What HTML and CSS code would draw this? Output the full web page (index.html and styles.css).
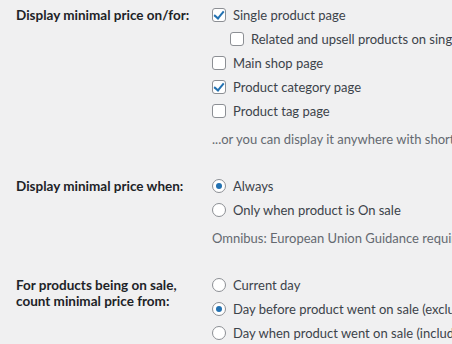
FILE: index.html
```html
<!DOCTYPE html>
<html lang="en">
<head>
  <meta charset="UTF-8" />
  <meta name="viewport" content="width=device-width, initial-scale=1" />
  <title>Minimal price settings</title>
  <link rel="stylesheet" href="styles.css">
</head>
<body>

  <div class="form-table">

    <div class="row">
      <div class="th">Display minimal price on/for:</div>
      <div class="td">
        <label class="opt"><input type="checkbox" checked /> Single product page</label>
        <label class="opt sub"><input type="checkbox" /> Related and upsell products on single product page</label>
        <label class="opt"><input type="checkbox" /> Main shop page</label>
        <label class="opt"><input type="checkbox" checked /> Product category page</label>
        <label class="opt"><input type="checkbox" /> Product tag page</label>
        <p class="description">...or you can display it anywhere with shortcode [omnibus_price_message]</p>
      </div>
    </div>

    <div class="row">
      <div class="th">Display minimal price when:</div>
      <div class="td">
        <label class="opt"><input type="radio" name="when" checked /> Always</label>
        <label class="opt"><input type="radio" name="when" /> Only when product is On sale</label>
        <p class="description">Omnibus: European Union Guidance requires displaying the minimal price if a product is on sale.</p>
      </div>
    </div>

    <div class="row">
      <div class="th">For products being on sale,<br>count minimal price from:</div>
      <div class="td">
        <label class="opt"><input type="radio" name="from" /> Current day</label>
        <label class="opt"><input type="radio" name="from" checked /> Day before product went on sale (exclude the sale day)</label>
        <label class="opt"><input type="radio" name="from" /> Day when product went on sale (include the sale day)</label>
      </div>
    </div>

  </div>

</body>
</html>
```

FILE: styles.css
```css
body {
  margin: 0;
  background: #f0f0f1;
  font-family: Lato, "Liberation Sans", sans-serif;
  font-size: 13px;
  color: #3c434a;
  overflow: hidden;
  white-space: nowrap;
}
.form-table {
  display: flex;
  flex-direction: column;
  gap: 23px;
  padding-top: 3px;
}
.row {
  display: flex;
}
.th {
  width: 212px;
  padding: 4px 0 0 16px;
  box-sizing: border-box;
  flex-shrink: 0;
  font-weight: 700;
  font-size: 13.5px;
  line-height: 16px;
  color: #1d2327;
}
.td {
  display: flex;
  flex-direction: column;
}
.opt {
  display: flex;
  align-items: center;
  height: 24px;
  gap: 7px;
}
.opt.sub {
  padding-left: 18px;
}
.description {
  margin: 4px 0 0 0;
  line-height: 24px;
  color: #646970;
}
input {
  appearance: none;
  margin: 0;
  width: 14px;
  height: 14px;
  border: 1px solid #8c8f94;
  background: #fff;
  box-sizing: border-box;
  position: relative;
  flex-shrink: 0;
}
input[type="checkbox"] {
  border-radius: 3px;
}
input[type="checkbox"]:checked::before {
  content: "";
  position: absolute;
  left: 3px;
  top: 0px;
  width: 4px;
  height: 8px;
  border: solid #2271b1;
  border-width: 0 2px 2px 0;
  transform: rotate(40deg);
}
input[type="radio"] {
  border-radius: 50%;
}
input[type="radio"]:checked::before {
  content: "";
  position: absolute;
  left: 3px;
  top: 3px;
  width: 6px;
  height: 6px;
  border-radius: 50%;
  background: #2271b1;
}
```
